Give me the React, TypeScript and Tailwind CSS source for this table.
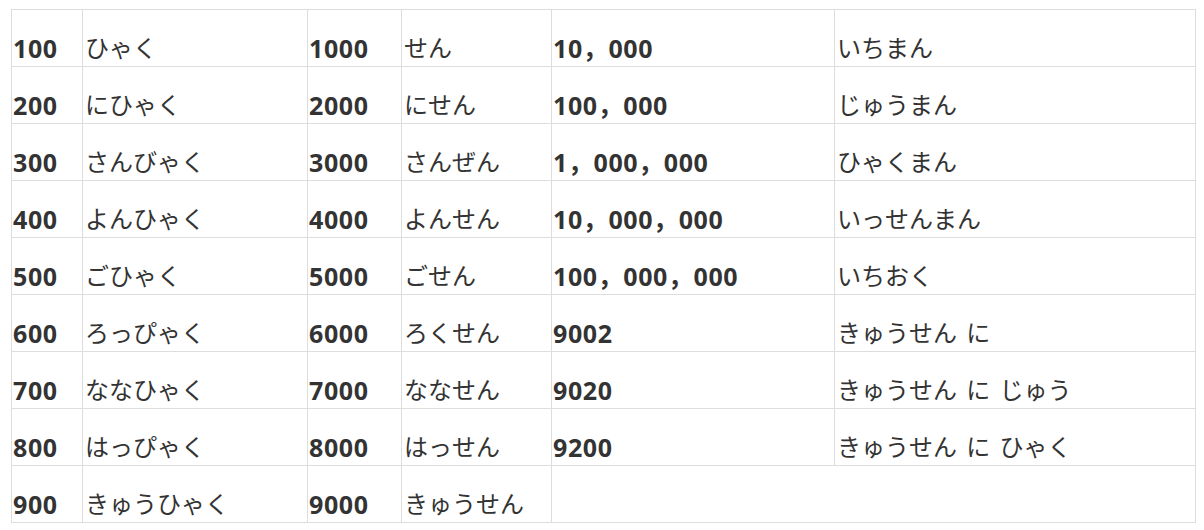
const rows: [string, string, string, string, string | null, string | null][] = [
  ["100", "ひゃく", "1000", "せん", "10，000", "いちまん"],
  ["200", "にひゃく", "2000", "にせん", "100，000", "じゅうまん"],
  ["300", "さんびゃく", "3000", "さんぜん", "1，000，000", "ひゃくまん"],
  ["400", "よんひゃく", "4000", "よんせん", "10，000，000", "いっせんまん"],
  ["500", "ごひゃく", "5000", "ごせん", "100，000，000", "いちおく"],
  ["600", "ろっぴゃく", "6000", "ろくせん", "9002", "きゅうせん に"],
  ["700", "ななひゃく", "7000", "ななせん", "9020", "きゅうせん に じゅう"],
  ["800", "はっぴゃく", "8000", "はっせん", "9200", "きゅうせん に ひゃく"],
  ["900", "きゅうひゃく", "9000", "きゅうせん", null, null],
];

const num = "border border-[#dddddd] pl-[1px] pb-[2px] align-bottom font-bold text-[25px] tracking-[0.6px]";
const kana = "border border-[#dddddd] pl-[2px] pb-[2px] align-bottom [word-spacing:3px]";

export default function App() {
  return (
    <div className="bg-white pl-[11px] pt-[9px] text-[24px] leading-[32px] text-[#333333] font-['Open_Sans','Noto_Sans_CJK_JP',sans-serif]">
      <table className="table-fixed border-collapse w-[1184px] border border-[#dddddd]">
        <colgroup>
          <col className="w-[71px]" />
          <col className="w-[225px]" />
          <col className="w-[94px]" />
          <col className="w-[150px]" />
          <col className="w-[283px]" />
          <col className="w-[361px]" />
        </colgroup>
        <tbody>
          {rows.map((r) => (
            <tr key={r[0]} className="h-[57px]">
              <td className={num}>{r[0]}</td>
              <td className={kana}>{r[1]}</td>
              <td className={num}>{r[2]}</td>
              <td className={kana}>{r[3]}</td>
              {r[4] === null ? (
                <td colSpan={2} className="border-b border-[#dddddd]" />
              ) : (
                <>
                  <td className={num}>{r[4]}</td>
                  <td className={kana}>{r[5]}</td>
                </>
              )}
            </tr>
          ))}
        </tbody>
      </table>
    </div>
  );
}
